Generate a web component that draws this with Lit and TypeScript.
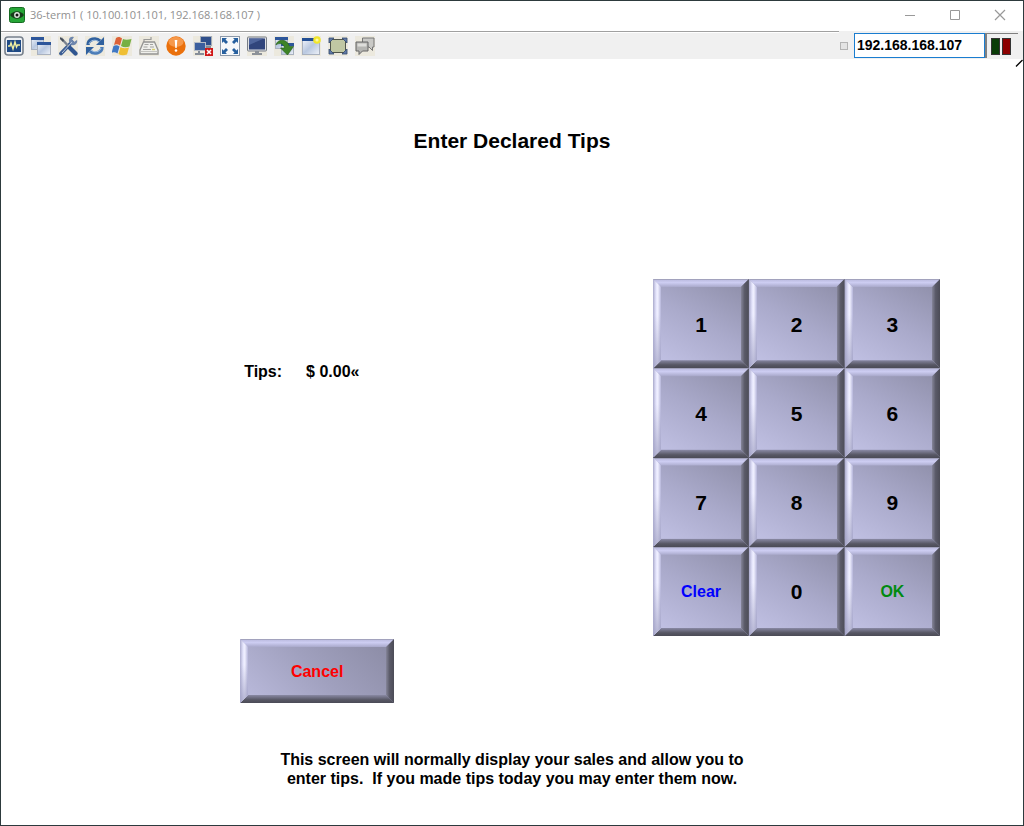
import { LitElement, html, css, svg } from "lit";
import { customElement, property, state } from "lit/decorators.js";

const windowShape = (x: number, y: number, w: number, h: number) => svg`
  <rect x=${x + 0.5} y=${y + 0.5} width=${w - 1} height=${h - 1} fill="url(#sheet)" stroke="#a9b1bf"/>
  <rect x=${x} y=${y} width=${w} height="3" fill="#2d569b"/>`;

const sheet = svg`<defs>
  <linearGradient id="sheet" x1="0" y1="0" x2="1" y2="1">
    <stop offset="0" stop-color="#f4f7fc"/><stop offset=".5" stop-color="#b9c8e0"/><stop offset="1" stop-color="#eef2f9"/>
  </linearGradient></defs>`;

const pad = svg`<rect width="20" height="20" fill="#ece9de"/>`;

const tools: { name: string; art: unknown }[] = [
  {
    name: "Monitor",
    art: svg`<rect x="1" y="1" width="18" height="18" rx="3" fill="#eef1f5" stroke="#77808c" stroke-width="1.6"/>
      <rect x="3" y="4" width="14" height="12" fill="#1f4a85"/>
      <path d="M4 10h2l1-3 2 6 2-7 1.500 5 1-2h2.500" fill="none" stroke="#f1f0a0" stroke-width="1.400"/>`,
  },
  { name: "Windows", art: svg`${sheet}${pad}${windowShape(0, 1, 13, 13)}${windowShape(6, 6, 14, 13)}` },
  {
    name: "Tools",
    art: svg`${pad}<path d="M3 17.500 14 6" stroke="#3d5e93" stroke-width="3.800" stroke-linecap="round"/>
      <path d="M12 1.500 C14 0 16 1 16 1l-2 3 2 2 3-2c1 3-2 6-5 5s-4-5-2-7.500z" fill="#6f87ad"/>
      <path d="M3 2l10 11" stroke="#7b8490" stroke-width="2.400"/>
      <path d="M2 1l4 3-1 2-3-3z" fill="#454d59"/>
      <path d="M12 12l5.500 5.500" stroke="#2f5590" stroke-width="4.200" stroke-linecap="round"/>
      <path d="M4 17 14 6" stroke="#b9c8df" stroke-width="1"/>`,
  },
  {
    name: "Refresh",
    art: svg`${pad}<path d="M3 9C3 3 11 1 15 5" fill="none" stroke="#31619f" stroke-width="3.400"/>
      <path d="M19 1v8h-8z" fill="#31619f"/>
      <path d="M17 11c0 6-8 8-12 4" fill="none" stroke="#4c7db8" stroke-width="3.400"/>
      <path d="M1 19v-8h8z" fill="#31619f"/>
      <path d="M4 8c1-4 7-5 10-2M16 12c-1 4-7 5-10 2" fill="none" stroke="#a9c6e5" stroke-width="1"/>`,
  },
  {
    name: "Start",
    art: svg`${pad}<path d="M4 2c2-1.500 4-1.500 6 .5L8 9.500C6 8 4 8 2 9z" fill="#dd6238"/>
      <path d="M11 3c2 1 5 1 8.500 0l-2 7.500c-3 1-6 1-8.500-.5z" fill="#76b043"/>
      <path d="M1.500 10c2-1 4-1 6 .5l-2 7c-2-1.500-4-1.500-6-.5z" fill="#3f78c5"/>
      <path d="M8.500 11c2 1.500 5 1.500 8.500 .5l-2 7c-3 1-6 1-8.500-.5z" fill="#efbf35"/>`,
  },
  {
    name: "Keyboard",
    art: svg`${pad}<path d="M5 6V3.500h7V1" fill="none" stroke="#9a9a98" stroke-width="1.200"/>
      <path d="M4.500 6h11l3.500 8v4H1v-4z" fill="#efefeb" stroke="#949492" stroke-width="1.300"/>
      <path d="M1.500 15.500h17" stroke="#c4c4c0"/>
      <path d="M5.500 8.500h4M4.500 11h4M4 13.500h8M11 8.500h3M11 11h4" stroke="#a3a3a0" stroke-width="1.200"/>
      <path d="M13 13.500h3" stroke="#d9cf6c" stroke-width="1.400"/>`,
  },
  {
    name: "Alert",
    art: svg`<circle cx="10" cy="10" r="9.700" fill="#ea700c"/><ellipse cx="10" cy="6" rx="7.500" ry="5" fill="#f6984a"/>
      <path d="M8.700 4h2.600l-.6 8H9.300z" fill="#fff"/><circle cx="10" cy="14.500" r="1.300" fill="#fff"/>`,
  },
  {
    name: "Disconnect",
    art: svg`${pad}<rect x="7.500" y=".5" width="11" height="9" fill="#2f4f8b" stroke="#a4acb8"/><path d="M10 11h8" stroke="#858d98" stroke-width="2"/>
      <rect x="1.500" y="6.500" width="11" height="8" fill="#3c5f9e" stroke="#b6bdc7"/><path d="M6 15v2M2 18h9" stroke="#858d98" stroke-width="2"/>
      <rect x="12" y="12" width="8" height="8" fill="#d01818"/><path d="M14 14l4 4m0-4-4 4" stroke="#fff" stroke-width="1.600"/>`,
  },
  {
    name: "Full screen",
    art: svg`<rect x=".5" y=".5" width="19" height="19" fill="#f6f8fa" stroke="#8d99a8"/>
      <g fill="#27609f"><path d="M2 2h5L5.500 3.500 8 6 6 8 3.500 5.500 2 7z"/><path d="M18 2v5l-1.500-1.500L14 8l-2-2 2.500-2.500L13 2z"/>
      <path d="M2 18v-5l1.500 1.500L6 12l2 2-2.500 2.500L7 18z"/><path d="M18 18h-5l1.500-1.500L12 14l2-2 2.500 2.500L18 13z"/></g>`,
  },
  {
    name: "Display",
    art: svg`${pad}<rect x=".5" y="1" width="19" height="14" rx="1" fill="#dfe1e5" stroke="#777d86"/>
      <rect x="2" y="2.500" width="16" height="11" fill="#31457c"/><path d="M2 2.500h15L2 9z" fill="#4f659c"/>
      <path d="M8 15h4v2h3v2H5v-2h3z" fill="#8c9199"/>`,
  },
  {
    name: "Transfer",
    art: svg`${sheet}${pad}${windowShape(1, 1, 13, 12)}${windowShape(7, 7, 13, 12)}
      <path d="M2 9C3 3 13 2 15.500 10.500h4L13.500 19 6.500 12h4C10 8 6 6 2 9z" fill="#3d8326" stroke="#255b18" stroke-width=".6"/>`,
  },
  {
    name: "New window",
    art: svg`${sheet}${pad}<rect x="1.500" y="2.500" width="17" height="16" fill="url(#sheet)" stroke="#a9b1bf"/>
      <path d="M1 3.500h15" stroke="#234f94" stroke-width="3"/>
      <circle cx="16" cy="4" r="3.800" fill="#f1e62c"/><circle cx="16" cy="4" r="1.600" fill="#fbf8a6"/>`,
  },
  {
    name: "Select area",
    art: svg`${pad}<rect x="2.500" y="3.500" width="15" height="13" fill="#c0c7a3" stroke="#50554b"/>
      <g fill="#6079a5" stroke="#344a70" stroke-width=".8"><path d="M1 2h5L1 7z"/><path d="M14 2h5v5z"/><path d="M1 13v5h5z"/><path d="M19 13v5h-5z"/></g>`,
  },
  {
    name: "Chat",
    art: svg`${pad}<path d="M7.500 2h11.500v9h-1.500v3.500L14 11H7.500z" fill="#c9c9c6" stroke="#777"/>
      <path d="M1 6h12v9H7.500L4 18.500V15H1z" fill="#b5b5b2" stroke="#666"/><path d="M2.500 7.500h9v3h-9z" fill="#dededb"/>`,
  },
];

@customElement("bevel-button")
export class BevelButton extends LitElement {
  @property() tone = "digit";

  static styles = css`
    :host { display: block; }
    .key {
      --face: linear-gradient(30deg, #c4c4e7, #aaaacb 50%, #8c8ca6);
      position: relative;
      display: grid;
      place-items: center;
      width: 100%;
      height: 100%;
      margin: 0;
      padding: 2px 0 0;
      border: 0;
      font: bold 16px/20px "Liberation Sans", Arial, sans-serif;
      color: #000;
      background:
        linear-gradient(#a2a2bd, #a2a2bd) top / 100% 1px no-repeat,
        linear-gradient(#b8b8dc, #cdcdf2 45%, #a9a9cb) top / 100% 8px no-repeat,
        linear-gradient(#8989a4, #575764 60%, #4b4b56) bottom / 100% 8px no-repeat,
        #a7a7c7;
    }
    .key::before {
      content: "";
      position: absolute;
      inset: 0;
      clip-path: polygon(0 0, 8px 8px, calc(100% - 8px) 8px, 100% 0, 100% 100%, calc(100% - 8px) calc(100% - 8px), 8px calc(100% - 8px), 0 100%);
      background:
        linear-gradient(rgb(170 170 205 / 0), rgb(170 170 205 / 0) 40%, rgb(160 160 195 / .75)) left / 8px 100% no-repeat,
        linear-gradient(90deg, #adadcf, #e6e6fd 40%, #f0f0ff 60%, #b5b5da) left / 8px 100% no-repeat,
        linear-gradient(90deg, #858599, #5a5a68 45%, #4c4c57) right / 8px 100% no-repeat,
        var(--face);
    }
    .label { position: relative; }
    .digit { font-size: 21px; }
    .clear { color: #00f; }
    .ok { color: #008a10; }
    .cancel { --face: linear-gradient(45deg, #bcbcde, #a0a0be 50%, #8a8aa3); color: #f00; }
    .key:active { filter: brightness(.92); }
  `;

  render() {
    return html`<button type="button" class="key ${this.tone}"><span class="label"><slot></slot></span></button>`;
  }
}

@customElement("app-root")
export class AppRoot extends LitElement {
  @state() private cents = 0;

  static styles = css`
    :host { display: block; font-family: "Liberation Sans", Arial, sans-serif; color: #000; }
    .window {
      box-sizing: border-box;
      display: flex;
      flex-direction: column;
      min-height: 100vh;
      border: 1px solid #2d3a3d;
      background: #fff;
    }
    .titlebar { display: flex; align-items: center; height: 30px; padding: 0 17px 2px 8px; box-sizing: border-box; }
    .app-icon { width: 16px; height: 16px; margin-right: 5px; }
    .caption { margin: 0; flex: 1; font: 11px/16px "Open Sans", "Noto Sans", sans-serif; color: #909090; white-space: nowrap; }
    .window-controls { display: flex; gap: 33px; }
    .plain { display: block; padding: 0; border: 0; background: none; line-height: 0; }
    .plain svg { display: block; }
    .toolbar { display: flex; height: 28px; background: #f0f0f0; }
    .tools {
      box-sizing: border-box;
      display: flex;
      flex: 1;
      gap: 7px;
      padding: 4px 3px 3px;
      border-top: 1px solid #a0a0a0;
      box-shadow: inset 0 1px #fff;
    }
    .tools .plain { width: 20px; height: 20px; }
    .connection { display: flex; align-items: flex-start; padding: 2px 5px 0 0; }
    .pin { appearance: none; box-sizing: border-box; width: 8px; height: 8px; margin: 9px 6px 0 1px; border: 1px solid #b4b4b4; background: #e4e4e4; }
    .address {
      box-sizing: border-box;
      width: 131px;
      height: 25px;
      padding: 0 2px 2px;
      border: 1px solid #1a7dd0;
      border-radius: 0;
      background: #fff;
      color: #000;
      font: bold 14px/20px "Liberation Sans", Arial, sans-serif;
      outline: none;
    }
    .lights {
      box-sizing: border-box;
      display: flex;
      gap: 2px;
      width: 33px;
      height: 25px;
      padding: 4px 4px 3px;
      border-top: 1px solid #808080;
      border-left: 2px solid #808080;
    }
    .light { width: 7px; border: 1px solid #333; background: #0b3d08; }
    .light.red { background: #8c0000; }
    .sizer { align-self: flex-end; width: 8px; height: 8px; }
    .content { display: flex; flex: 1; flex-direction: column; }
    .heading { margin: 61px 0 0; text-align: center; font-size: 21px; line-height: 26px; }
    .entry {
      display: flex;
      justify-content: space-between;
      align-items: flex-start;
      margin-top: 125px;
      padding: 0 8.1% 0 23.4%;
    }
    .amounts { display: flex; flex-direction: column; gap: 257px; padding-top: 83px; }
    .tips { display: flex; gap: 24px; margin: 0; padding-left: 4px; font-weight: bold; font-size: 16px; line-height: 20px; }
    .tips dd { margin: 0; }
    .cancel { width: 154px; height: 64px; }
    .keypad { display: grid; grid-template: repeat(4, 1fr) / repeat(3, 1fr); width: 287px; height: 357px; }
    .note { margin: 47px auto 34px; text-align: center; font-weight: bold; font-size: 16px; line-height: 19px; white-space: pre-line; }
  `;

  private press(key: string) {
    if (key === "Clear") this.cents = 0;
    else if (key !== "OK") this.cents = this.cents * 10 + Number(key);
  }

  render() {
    const keys = ["1", "2", "3", "4", "5", "6", "7", "8", "9", "Clear", "0", "OK"];
    return html`
      <div class="window">
        <header class="titlebar">
          <svg class="app-icon" viewBox="0 0 16 16" aria-hidden="true">
            <rect x=".5" y=".5" width="15" height="15" rx="2" fill="#25a536" stroke="#176b22"/>
            <path d="M1 8c4-5 10-5 14 0-4 5-10 5-14 0z" fill="#173d1b"/>
            <circle cx="8" cy="8" r="2.900" fill="#dfe9df"/><circle cx="8" cy="8" r="1.500" fill="#111"/>
          </svg>
          <h1 class="caption">36-term1 ( 10.100.101.101, 192.168.168.107 )</h1>
          <div class="window-controls">
            <button class="plain" aria-label="Minimize"><svg width="12" height="12"><path d="M1 6.500h10" stroke="#999"/></svg></button>
            <button class="plain" aria-label="Maximize"><svg width="12" height="12"><path d="M1.500 1.500h9v9h-9z" fill="none" stroke="#999"/></svg></button>
            <button class="plain" aria-label="Close"><svg width="12" height="12"><path d="M1 1l10 10M11 1 1 11" stroke="#999" stroke-width="1.200"/></svg></button>
          </div>
        </header>
        <div class="toolbar">
          <div class="tools">
            ${tools.map((t) => html`<button class="plain" aria-label=${t.name}><svg width="20" height="20" viewBox="0 0 20 20">${t.art}</svg></button>`)}
          </div>
          <div class="connection">
            <input class="pin" type="checkbox" aria-label="Pin" />
            <input class="address" type="text" aria-label="Address" value="192.168.168.107" />
            <div class="lights"><span class="light"></span><span class="light red"></span></div>
          </div>
        </div>
        <main class="content">
          <svg class="sizer" viewBox="0 0 8 8" aria-hidden="true"><path d="M1 7.500 7.500 1" stroke="#000" stroke-width="1.300"/></svg>
          <h2 class="heading">Enter Declared Tips</h2>
          <section class="entry">
            <div class="amounts">
              <dl class="tips"><dt>Tips:</dt><dd>$ ${(this.cents / 100).toFixed(2)}«</dd></dl>
              <bevel-button class="cancel" tone="cancel">Cancel</bevel-button>
            </div>
            <div class="keypad">
              ${keys.map((k) => html`<bevel-button tone=${/\d/.test(k) ? "digit" : k.toLowerCase()} @click=${() => this.press(k)}>${k}</bevel-button>`)}
            </div>
          </section>
          <p class="note">This screen will normally display your sales and allow you to
enter tips. &nbsp;If you made tips today you may enter them now.</p>
        </main>
      </div>
    `;
  }
}
